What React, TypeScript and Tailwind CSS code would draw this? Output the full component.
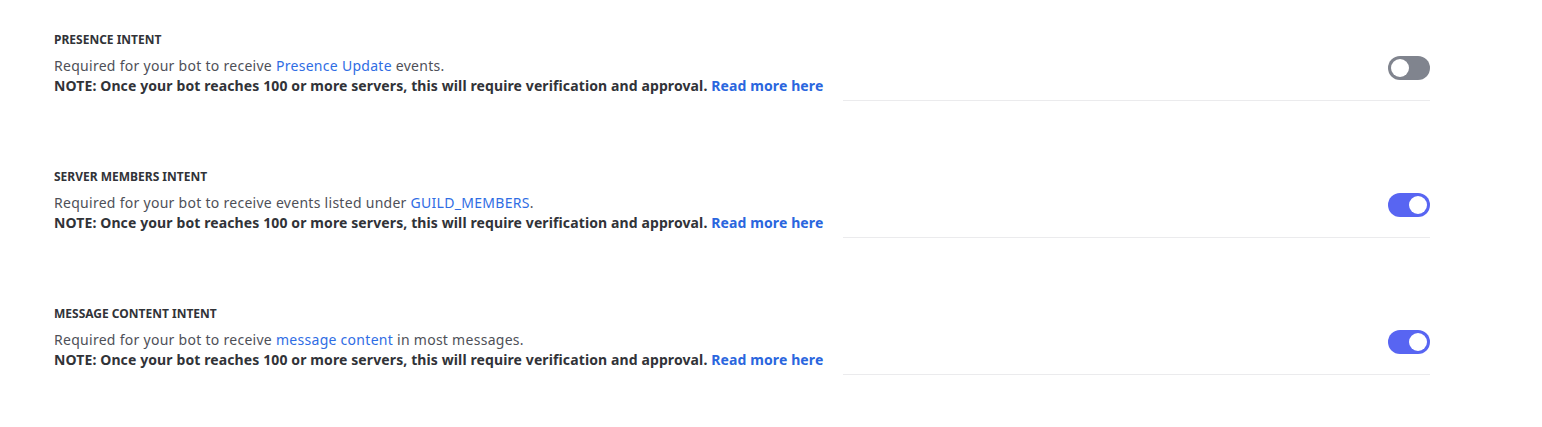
import React from 'react';

type Intent = {
  title: string;
  before: string;
  link: string;
  after: string;
  enabled: boolean;
};

const intents: Intent[] = [
  {
    title: 'Presence Intent',
    before: 'Required for your bot to receive ',
    link: 'Presence Update',
    after: ' events.',
    enabled: false,
  },
  {
    title: 'Server Members Intent',
    before: 'Required for your bot to receive events listed under ',
    link: 'GUILD_MEMBERS',
    after: '.',
    enabled: true,
  },
  {
    title: 'Message Content Intent',
    before: 'Required for your bot to receive ',
    link: 'message content',
    after: ' in most messages.',
    enabled: true,
  },
];

const Toggle = ({ on, onClick }: { on: boolean; onClick: () => void }) => (
  <button
    onClick={onClick}
    className={
      on
        ? 'relative w-[42px] h-6 rounded-full bg-[#5865f2] flex items-center justify-end px-[3px]'
        : 'relative w-[42px] h-6 rounded-full bg-[#80848e] flex items-center justify-start px-[3px]'
    }
  >
    <span className="block w-[18px] h-[18px] rounded-full bg-white" />
  </button>
);

export default function App() {
  const [state, setState] = React.useState(intents.map((i) => i.enabled));

  return (
    <div className="w-[1542px] h-[427px] bg-white font-['Noto_Sans',sans-serif] pt-8 pl-[54px]">
      <div className="w-[1376px] flex flex-col gap-[68px]">
        {intents.map((intent, idx) => (
          <div key={intent.title} className="flex">
            <div className="flex flex-col">
              <h3 className="text-[12px] leading-4 font-bold uppercase text-[#313338]">
                {intent.title}
              </h3>
              <div className="mt-2 pb-[5px] text-[14px] leading-5 text-[#4e5058] whitespace-nowrap">
                <p className="tracking-[0.02em]">
                  {intent.before}
                  <a className="text-[#2f6de4] cursor-pointer">{intent.link}</a>
                  {intent.after}
                </p>
                <p className="font-bold text-[#313338] tracking-[0.008em]">
                  NOTE: Once your bot reaches 100 or more servers, this will require verification and approval.{' '}
                  <a className="text-[#2a66de] cursor-pointer">Read more here</a>
                </p>
              </div>
            </div>
            <div className="flex-1 ml-5 border-b border-[#ebebed] flex items-center justify-end pt-1">
              <Toggle
                on={state[idx]}
                onClick={() => setState(state.map((s, i) => (i === idx ? !s : s)))}
              />
            </div>
          </div>
        ))}
      </div>
    </div>
  );
}
